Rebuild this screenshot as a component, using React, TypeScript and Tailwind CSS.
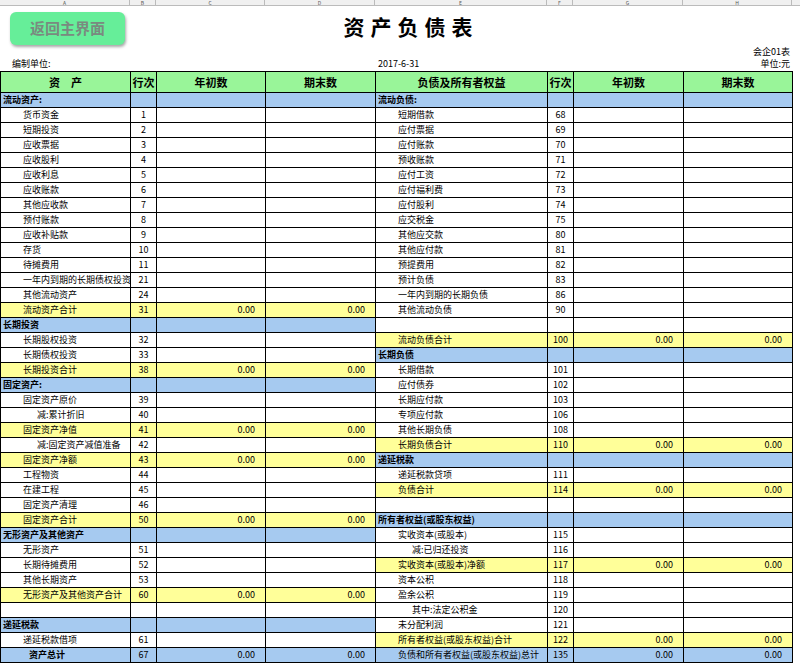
import React from 'react';

type Kind = 'item' | 'sub' | 'head' | 'sum' | 'total' | 'blank';
type Row = { k: Kind; t?: string; n?: string };

const left: Row[] = [
  { k: 'head', t: '流动资产:' },
  { k: 'item', t: '货币资金', n: '1' },
  { k: 'item', t: '短期投资', n: '2' },
  { k: 'item', t: '应收票据', n: '3' },
  { k: 'item', t: '应收股利', n: '4' },
  { k: 'item', t: '应收利息', n: '5' },
  { k: 'item', t: '应收账款', n: '6' },
  { k: 'item', t: '其他应收款', n: '7' },
  { k: 'item', t: '预付账款', n: '8' },
  { k: 'item', t: '应收补贴款', n: '9' },
  { k: 'item', t: '存货', n: '10' },
  { k: 'item', t: '待摊费用', n: '11' },
  { k: 'item', t: '一年内到期的长期债权投资', n: '21' },
  { k: 'item', t: '其他流动资产', n: '24' },
  { k: 'sum', t: '流动资产合计', n: '31' },
  { k: 'head', t: '长期投资' },
  { k: 'item', t: '长期股权投资', n: '32' },
  { k: 'item', t: '长期债权投资', n: '33' },
  { k: 'sum', t: '长期投资合计', n: '38' },
  { k: 'head', t: '固定资产:' },
  { k: 'item', t: '固定资产原价', n: '39' },
  { k: 'sub', t: '减:累计折旧', n: '40' },
  { k: 'sum', t: '固定资产净值', n: '41' },
  { k: 'sub', t: '减:固定资产减值准备', n: '42' },
  { k: 'sum', t: '固定资产净额', n: '43' },
  { k: 'item', t: '工程物资', n: '44' },
  { k: 'item', t: '在建工程', n: '45' },
  { k: 'item', t: '固定资产清理', n: '46' },
  { k: 'sum', t: '固定资产合计', n: '50' },
  { k: 'head', t: '无形资产及其他资产' },
  { k: 'item', t: '无形资产', n: '51' },
  { k: 'item', t: '长期待摊费用', n: '52' },
  { k: 'item', t: '其他长期资产', n: '53' },
  { k: 'sum', t: '无形资产及其他资产合计', n: '60' },
  { k: 'blank' },
  { k: 'head', t: '递延税款' },
  { k: 'item', t: '递延税款借项', n: '61' },
  { k: 'total', t: '资产总计', n: '67' },
];

const right: Row[] = [
  { k: 'head', t: '流动负债:' },
  { k: 'item', t: '短期借款', n: '68' },
  { k: 'item', t: '应付票据', n: '69' },
  { k: 'item', t: '应付账款', n: '70' },
  { k: 'item', t: '预收账款', n: '71' },
  { k: 'item', t: '应付工资', n: '72' },
  { k: 'item', t: '应付福利费', n: '73' },
  { k: 'item', t: '应付股利', n: '74' },
  { k: 'item', t: '应交税金', n: '75' },
  { k: 'item', t: '其他应交款', n: '80' },
  { k: 'item', t: '其他应付款', n: '81' },
  { k: 'item', t: '预提费用', n: '82' },
  { k: 'item', t: '预计负债', n: '83' },
  { k: 'item', t: '一年内到期的长期负债', n: '86' },
  { k: 'item', t: '其他流动负债', n: '90' },
  { k: 'blank' },
  { k: 'sum', t: '流动负债合计', n: '100' },
  { k: 'head', t: '长期负债' },
  { k: 'item', t: '长期借款', n: '101' },
  { k: 'item', t: '应付债券', n: '102' },
  { k: 'item', t: '长期应付款', n: '103' },
  { k: 'item', t: '专项应付款', n: '106' },
  { k: 'item', t: '其他长期负债', n: '108' },
  { k: 'sum', t: '长期负债合计', n: '110' },
  { k: 'head', t: '递延税款' },
  { k: 'item', t: '递延税款贷项', n: '111' },
  { k: 'sum', t: '负债合计', n: '114' },
  { k: 'blank' },
  { k: 'head', t: '所有者权益(或股东权益)' },
  { k: 'item', t: '实收资本(或股本)', n: '115' },
  { k: 'sub', t: '减:已归还投资', n: '116' },
  { k: 'sum', t: '实收资本(或股本)净额', n: '117' },
  { k: 'item', t: '资本公积', n: '118' },
  { k: 'item', t: '盈余公积', n: '119' },
  { k: 'sub', t: '其中:法定公积金', n: '120' },
  { k: 'item', t: '未分配利润', n: '121' },
  { k: 'sum', t: '所有者权益(或股东权益)合计', n: '122' },
  { k: 'total', t: '负债和所有者权益(或股东权益)总计', n: '135' },
];

const bg = (k: Kind) =>
  k === 'head' || k === 'total' ? 'bg-[#a6caf0]' : k === 'sum' ? 'bg-[#ffff99]' : 'bg-white';

function Cells({ r, isLeft }: { r: Row; isLeft: boolean }) {
  const c = bg(r.k);
  const cell = 'border border-black h-[15px] p-0 leading-[14px]';
  const num = r.k === 'sum' || r.k === 'total' ? '0.00' : '';
  const pad =
    r.k === 'head'
      ? 'pl-[2px] font-bold'
      : r.k === 'sub'
        ? 'pl-[36px]'
        : r.k === 'total' && isLeft
          ? 'pl-[28px] font-bold'
          : 'pl-[22px]';
  return (
    <>
      <td className={`${cell} ${c} ${pad} whitespace-nowrap overflow-hidden`}>{r.t}</td>
      <td className={`${cell} ${c} text-center`}>{r.n}</td>
      <td className={`${cell} ${c} text-right pr-[10px]`}>{num}</td>
      <td className={`${cell} ${c} text-right pr-[10px]`}>{num}</td>
    </>
  );
}

export default function App() {
  const letters = ['A', 'B', 'C', 'D', 'E', 'F', 'G', 'H'];
  const widths = [130, 26, 109, 110, 172, 26, 110, 109];
  return (
    <div
      className="w-[800px] h-[668px] bg-white overflow-hidden text-[9px] text-black"
      style={{ fontFamily: '"Noto Sans CJK SC", "DejaVu Sans", sans-serif' }}
    >
      {/* column letter strip */}
      <div className="flex h-[6px] bg-[#f0f0f0] border-b border-[#bbb] overflow-hidden">
        {letters.map((l, i) => (
          <div
            key={l}
            style={{ width: widths[i] }}
            className="border-r border-[#bbb] text-center text-[5px] leading-[5px] text-[#555]"
          >
            {l}
          </div>
        ))}
      </div>

      {/* title area */}
      <div className="flex w-[792px] h-[37px] items-start">
        <div className="w-[130px] pl-[10px] pt-[6px]">
          <button className="w-[115px] h-[33px] rounded-md bg-[#66ee99] shadow-[1px_2px_3px_rgba(0,0,0,0.35)] text-[15px] font-bold text-[#7a8a80]">
            返回主界面
          </button>
        </div>
        <div className="flex-1 pl-[30px] pt-[6px] text-center text-[21px] leading-[28px] font-bold tracking-[6px]">
          资产负债表
        </div>
        <div className="w-[130px]" />
      </div>
      <div className="w-[792px] h-[14px] pt-[3px] text-right pr-[2px] leading-[11px]">会企01表</div>
      <div className="flex w-[792px] h-[14px] leading-[14px]">
        <div className="w-[375px] pl-[12px]">编制单位:</div>
        <div className="flex-1 pl-[3px]">2017-6-31</div>
        <div className="pr-[2px]">单位:元</div>
      </div>

      <table className="border-collapse table-fixed w-[792px]">
        <colgroup>
          {widths.map((w, i) => (
            <col key={i} style={{ width: w }} />
          ))}
        </colgroup>
        <thead>
          <tr className="bg-[#99f599] text-[11px] font-bold h-[21px]">
            {['资　产', '行次', '年初数', '期末数', '负债及所有者权益', '行次', '年初数', '期末数'].map((h, i) => (
              <th key={i} className="border border-black p-0 font-bold">
                {h}
              </th>
            ))}
          </tr>
        </thead>
        <tbody>
          {left.map((r, i) => (
            <tr key={i}>
              <Cells r={r} isLeft />
              <Cells r={right[i]} isLeft={false} />
            </tr>
          ))}
        </tbody>
      </table>
    </div>
  );
}
